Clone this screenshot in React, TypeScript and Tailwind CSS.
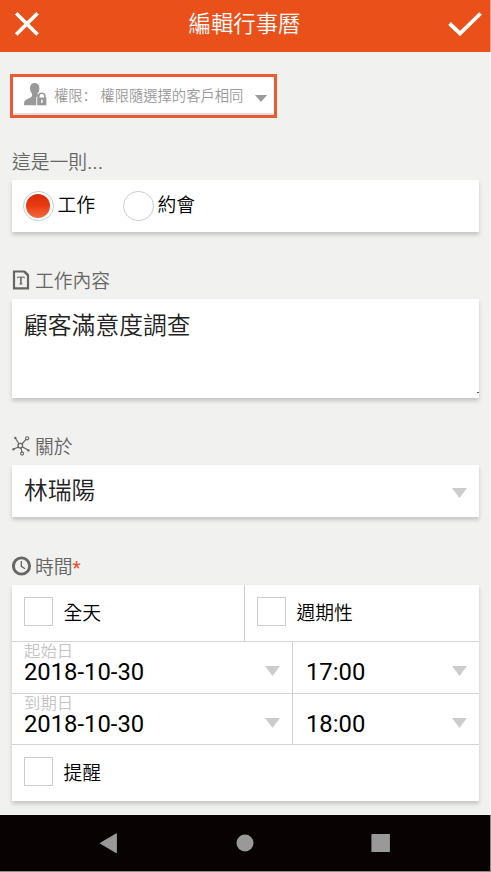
import { useState } from 'react';
import type { ReactNode } from 'react';

function Arrow({ className }: { className: string }) {
  return (
    <svg viewBox="0 0 15 10" preserveAspectRatio="none" className={className}>
      <path d="M0 0H15L7.5 10Z" fill="currentColor" />
    </svg>
  );
}

function UserLockIcon() {
  return (
    <svg width="23" height="23" viewBox="0 0 23 23" className="mb-[3px] shrink-0 text-[#999]">
      <path
        d="M10.700 0C7.700 0 6 2.200 6 5.200c0 2.200.800 4.200 2 5.200v2.400C7.600 14.200 6 14.800 4 15.700 1.600 16.700.1 17.800.1 20V22.300H12.300V14.300h1.200c.1-1 .5-1.900 1.200-2.500-.8-.2-1.200-.7-1.200-1.400 1.200-1 1.900-3 1.900-5.200C15.400 2.200 13.700 0 10.700 0Z"
        fill="currentColor"
      />
      <path d="M14.700 15v-1.600a3.100 3.100 0 0 1 6.200 0V15" fill="none" stroke="currentColor" strokeWidth="1.600" />
      <path d="M13.200 14.500h9.200v7.800h-9.200z" fill="currentColor" />
      <path d="M17.200 16.700h1.400v3.200h-1.400z" fill="#fff" />
    </svg>
  );
}

function TextFileIcon() {
  return (
    <svg width="18" height="20" viewBox="0 0 18 20" className="shrink-0">
      <path d="M2 1.500H12L16 5.500V18.300H2Z" fill="none" stroke="currentColor" strokeWidth="2.200" />
      <path d="M11.500 1 17 6.500V4.500L13.500 1Z" fill="currentColor" />
      <path d="M5.600 8.300V7.100H12.200V8.300" fill="none" stroke="currentColor" strokeWidth="1" />
      <path d="M8.900 7V14" stroke="currentColor" strokeWidth="1.600" />
      <path d="M7.400 14H10.400" stroke="currentColor" strokeWidth="1" />
    </svg>
  );
}

function NetworkIcon() {
  return (
    <svg width="18" height="20" viewBox="0 0 18 20" className="shrink-0" fill="none" stroke="currentColor">
      <path d="M3.500 2.300 7 8M14.300 3.200 10 8M1.500 13.200 6.300 11M10.300 10.800 16.300 14.200M9 12 9.900 16.500" strokeWidth="1.200" />
      <circle cx="8.300" cy="9.700" r="2.300" strokeWidth="1.300" />
      <circle cx="15.200" cy="2.300" r="1.600" strokeWidth="1.100" />
      <circle cx="10.100" cy="17.600" r="1.500" strokeWidth="1.100" />
      <circle cx="3.300" cy="1.900" r="1.200" fill="currentColor" stroke="none" />
      <circle cx="1.500" cy="13.300" r="1.200" fill="currentColor" stroke="none" />
      <circle cx="16.400" cy="14.400" r="1.200" fill="currentColor" stroke="none" />
    </svg>
  );
}

function ClockIcon() {
  return (
    <svg width="20" height="20" viewBox="0 0 20 20" className="shrink-0" fill="none" stroke="currentColor">
      <circle cx="9.500" cy="10" r="8.100" strokeWidth="2.900" />
      <path d="M9.300 5V10.300L13 12.800" strokeWidth="1.300" />
    </svg>
  );
}

function SectionLabel({ icon, children }: { icon?: ReactNode; children: ReactNode }) {
  return (
    <div className="flex h-7 items-center text-[18.8px] leading-7 font-[350] text-[#666]">
      {icon && <span className="w-[23px] shrink-0">{icon}</span>}
      <span className="mt-[3px]">{children}</span>
    </div>
  );
}

function Radio({ label, checked, onClick }: { label: string; checked: boolean; onClick: () => void }) {
  return (
    <button type="button" onClick={onClick} className="flex items-center gap-1 text-[18.8px] text-black">
      <span className="flex size-[30.5px] items-center justify-center rounded-full border border-[#ccc] bg-white">
        {checked && <span className="size-6 rounded-full bg-linear-to-b from-[#d92b0c] via-[#ea3b12] to-[#f2683c]" />}
      </span>
      <span className="leading-7 font-[350]">{label}</span>
    </button>
  );
}

function Checkbox({ label, checked, onClick }: { label: string; checked: boolean; onClick: () => void }) {
  return (
    <button type="button" onClick={onClick} className="flex items-center gap-[10.5px] text-[18.8px] text-black">
      <span className="flex size-[29px] items-center justify-center border border-[#ccc] bg-white">
        {checked && <span className="size-4 bg-[#ea501a]" />}
      </span>
      <span className="mt-[5px] leading-7 font-[350]">{label}</span>
    </button>
  );
}

function DateRow({ label, date, time }: { label: string; date: string; time: string }) {
  return (
    <div className="flex h-[51.5px] border-t border-[#d4d4d4]">
      <div className="flex w-[281px] items-start justify-between border-r border-[#d0d0d0] pr-3 pl-3">
        <div className="flex flex-col pt-px">
          <span className="h-[17px] text-[16.4px] leading-[18px] font-[350] text-[#c4c4c4]">{label}</span>
          <span className="text-[23.8px] leading-6 text-black">{date}</span>
        </div>
        <Arrow className="mt-6 h-2.5 w-[15px] text-[#ccc]" />
      </div>
      <div className="flex flex-1 items-start justify-between pr-3 pl-[13px]">
        <span className="mt-[18px] text-[23.8px] leading-6 text-black">{time}</span>
        <Arrow className="mt-6 h-2.5 w-[15px] text-[#ccc]" />
      </div>
    </div>
  );
}

const card = 'bg-white shadow-[0_3px_4px_0px_rgba(0,0,0,0.18)]';

export default function App() {
  const [kind, setKind] = useState('task');
  const [options, setOptions] = useState({ allDay: false, recurring: false, reminder: false });

  const toggle = (field: 'allDay' | 'recurring' | 'reminder') => {
    setOptions(prev => ({ ...prev, [field]: !prev[field] }));
  };

  return (
    <div className="flex h-[872px] w-[491px] flex-col overflow-hidden bg-[#f1f1ef] font-['Roboto','Noto_Sans_CJK_TC',sans-serif] font-normal">
      <header className="flex h-[52px] shrink-0 items-center justify-between border-r border-[#f4a98c] bg-[#ea501a] pr-2 pl-[14px] text-white">
        <button type="button" aria-label="Close" className="mt-[-4px]">
          <svg width="26" height="26" viewBox="0 0 26 26">
            <path d="M2.200 2.200 23.500 23.500M23.500 2.200 2.200 23.500" stroke="currentColor" strokeWidth="3.700" />
          </svg>
        </button>
        <h1 className="mt-[-2px] ml-px text-[22.4px] font-[350]">編輯行事曆</h1>
        <button type="button" aria-label="Save" className="mt-[-4px]">
          <svg width="34" height="24" viewBox="0 0 34 24">
            <path d="M1.500 11.500 12 21.500 32.500 1.500" fill="none" stroke="currentColor" strokeWidth="3.800" />
          </svg>
        </button>
      </header>

      <main className="flex flex-1 flex-col border-r border-[#fafafa] pr-[11px] pl-3">
        <button
          type="button"
          className="mt-[22px] -ml-0.5 flex h-11 w-[267px] items-center border-[3px] border-[#ec5a34] bg-white pl-[11px] text-[14.3px] text-[#999] shadow-[inset_0_-2px_1px_rgba(0,0,0,0.12)]"
        >
          <UserLockIcon />
          <span className="ml-[7px] font-[350] whitespace-nowrap">
            權限<span className="font-['Noto_Sans_CJK_SC',sans-serif]">：</span> 權限隨選擇的客戶相同
          </span>
          <Arrow className="mt-1 ml-3 h-[7px] w-3 shrink-0 text-[#999]" />
        </button>

        <div className="mt-[29px]">
          <SectionLabel>
            這是一則<span className="tracking-[0.5px] font-normal">...</span>
          </SectionLabel>
        </div>
        <div className={`${card} mt-[5px] flex h-[52px] items-center gap-7 pl-[11px]`}>
          <Radio label="工作" checked={kind === 'task'} onClick={() => setKind('task')} />
          <Radio label="約會" checked={kind === 'meeting'} onClick={() => setKind('meeting')} />
        </div>

        <div className="mt-[34px]">
          <SectionLabel icon={<TextFileIcon />}>工作內容</SectionLabel>
        </div>
        <div className={`${card} mt-[5px] flex h-[99px] items-start justify-between pl-3`}>
          <p className="pt-[9px] text-[23.8px] leading-9 font-[350] text-[#222]">顧客滿意度調查</p>
          <span className="mb-[5px] h-px w-0.5 self-end bg-[#555]" />
        </div>

        <div className="mt-[34px]">
          <SectionLabel icon={<NetworkIcon />}>關於</SectionLabel>
        </div>
        <div className={`${card} mt-[5px] flex h-[52px] items-center justify-between px-3`}>
          <span className="mt-[-1px] text-[23.8px] leading-9 font-[350] text-[#222]">林瑞陽</span>
          <Arrow className="mt-1 h-2.5 w-[15px] text-[#ccc]" />
        </div>

        <div className="mt-[35px]">
          <SectionLabel icon={<ClockIcon />}>
            時間<span className="font-normal text-[#f04a24]">*</span>
          </SectionLabel>
        </div>
        <div className={`${card} mt-[5px] flex h-[216px] flex-col`}>
          <div className="flex h-14">
            <div className="flex w-[233px] items-center border-r border-[#ccc] pb-1 pl-3">
              <Checkbox label="全天" checked={options.allDay} onClick={() => toggle('allDay')} />
            </div>
            <div className="flex flex-1 items-center pb-1 pl-3">
              <Checkbox label="週期性" checked={options.recurring} onClick={() => toggle('recurring')} />
            </div>
          </div>
          <DateRow label="起始日" date="2018-10-30" time="17:00" />
          <DateRow label="到期日" date="2018-10-30" time="18:00" />
          <div className="flex flex-1 items-center border-t border-[#d4d4d4] pb-1 pl-3">
            <Checkbox label="提醒" checked={options.reminder} onClick={() => toggle('reminder')} />
          </div>
        </div>
      </main>

      <nav className="h-[57px] shrink-0 border-r border-b border-[#8c8c8c] bg-[#080202] text-[#999]">
        <svg width="490" height="56" viewBox="0 0 490 56" fill="currentColor" stroke="currentColor" strokeLinejoin="round">
          <path d="M116.300 19V37.500L100.500 28.300Z" strokeWidth="1.200" />
          <circle cx="245" cy="28" r="8.500" stroke="none" />
          <path d="M372 19.500H389.300V36.500H372Z" strokeWidth="1.200" />
        </svg>
      </nav>
    </div>
  );
}
